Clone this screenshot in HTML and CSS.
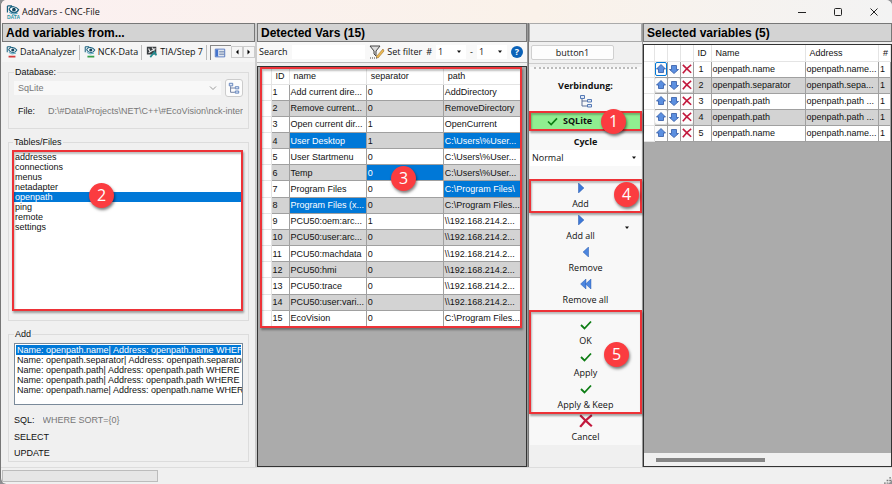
FILE: index.html
```html
<!DOCTYPE html>
<html lang="en">
<head>
    <meta charset="UTF-8">
    <meta name="viewport" content="width=device-width, initial-scale=1.0">
    <title>AddVars - CNC-File</title>
    <link rel="stylesheet" href="styles.css">
</head>
<body>
    <!-- Icon sprites -->
    <svg class="sprites" aria-hidden="true">
        <symbol id="eye" viewBox="0 0 14 14">
            <path d="M1 1h5M1 1v7M3 4c2-3 7-3 10 1-2 4-7 5-10 0z" fill="#fff" stroke="#17607f" stroke-width="1.3"/>
            <circle cx="8" cy="5" r="2" fill="#12445e"/>
            <path d="M3 8l4 2 5-1" fill="none" stroke="#3e9cba" stroke-width="1"/>
        </symbol>
        <symbol id="tree" viewBox="0 0 14 14">
            <path d="M3 5v7h5M3 7h5" fill="none" stroke="#5d6f96" stroke-width="1"/>
            <path d="M1.500 1.500h4v3h-4zM8.500 5.500h4v2.500h-4zM8.500 10.500h4v2.500h-4z" fill="#dfe9f8" stroke="#5579b5"/>
        </symbol>
        <symbol id="check" viewBox="0 0 12 10">
            <path d="M1 5l3.500 3.500L11 1.500" fill="none" stroke="#0d7d14" stroke-width="1.800"/>
        </symbol>
        <symbol id="cross" viewBox="0 0 12 12">
            <path d="M1 1c3 3 6 6 10 9.500M11 1C7 4 4 7 1 11" fill="none" stroke="#c2183c" stroke-width="1.900"/>
        </symbol>
        <symbol id="right" viewBox="0 0 8 12"><path d="M1 0l6.500 6L1 12z" fill="#3c78d8" stroke="#2457ad" stroke-width=".6"/></symbol>
        <symbol id="left" viewBox="0 0 8 12"><path d="M7 0L.5 6 7 12z" fill="#4c86df" stroke="#2457ad" stroke-width=".6"/></symbol>
        <symbol id="up" viewBox="0 0 10 10"><path d="M5 .5L9.500 5H7.500v3.500h-5V5H.5z" fill="#5b8fe0" stroke="#3159a4" stroke-width=".8"/></symbol>
        <symbol id="down" viewBox="0 0 10 10"><path d="M5 9.500L.5 5.500h2v-4h5v4h2z" fill="#5b8fe0" stroke="#3159a4" stroke-width=".8"/></symbol>
        <symbol id="caret" viewBox="0 0 6 4"><path d="M1 .5h4L3 3z" fill="#111"/></symbol>
        <symbol id="chevron" viewBox="0 0 8 6"><path d="M1 1.500l3 3 3-3" fill="none" stroke="#999"/></symbol>
    </svg>

    <div class="window">
        <header class="titlebar">
            <svg class="app-icon" viewBox="0 0 14 14">
                <use href="#eye" width="14" height="13"/>
                <text x="1" y="14" class="icon-text">DATA</text>
            </svg>
            <h1>AddVars - CNC-File</h1>
            <button class="win-button" aria-label="Minimize"><svg viewBox="0 0 8 8"><path d="M0 4.500h8"/></svg></button>
            <button class="win-button" aria-label="Maximize"><svg viewBox="0 0 8 8"><rect x=".5" y=".5" width="7" height="7" rx="1"/></svg></button>
            <button class="win-button" aria-label="Close"><svg viewBox="0 0 8 8"><path d="M.5.5l7 7M7.500.5l-7 7"/></svg></button>
        </header>

        <main class="columns">
            <!-- Source -->
            <section class="panel source">
                <h2>Add variables from...</h2>
                <nav class="tabs">
                    <button class="tab"><svg viewBox="0 0 14 14"><use href="#eye" width="14" height="13"/><path d="M3 12.500h8" stroke="#d43c3c" stroke-width="2"/></svg>DataAnalyzer</button>
                    <button class="tab"><svg viewBox="0 0 14 14"><use href="#eye" width="14" height="13"/><path d="M4 12.500h8" stroke="#37a04a" stroke-width="2"/></svg>NCK-Data</button>
                    <button class="tab"><svg viewBox="0 0 14 14"><path d="M1 1h11v9H1z" fill="#3b3f42"/><path d="M3 3l2 4M7 2l3 3M3 8l8-5" stroke="#eee" stroke-width="1.300"/><path d="M5 13l5-6 2 4" fill="none" stroke="#238c91" stroke-width="2"/></svg>TIA/Step 7</button>
                    <button class="tab current" aria-label="Database"><svg viewBox="0 0 14 12"><path d="M1.500 1.500h11v9h-11z" fill="#fff" stroke="#4168b8"/><path d="M2 2h3v8H2z" fill="#4474cd"/><path d="M6 4h6M6 6h6M6 8h6" stroke="#54709f"/></svg></button>
                    <button class="scroll-button" aria-label="Previous tab"><svg viewBox="0 0 6 8"><path d="M4.500 1.500v5L2 4z"/></svg></button>
                    <button class="scroll-button" aria-label="Next tab"><svg viewBox="0 0 6 8"><path d="M1.500 1.500v5L4 4z"/></svg></button>
                </nav>
                <div class="tab-page">
                    <fieldset class="database">
                        <legend>Database:</legend>
                        <div class="field-row">
                            <div class="combo disabled">
                                <select aria-label="Database" disabled><option>SqLite</option></select>
                                <svg><use href="#chevron"/></svg>
                            </div>
                            <button class="tree-button" aria-label="Browse"><svg><use href="#tree"/></svg></button>
                        </div>
                        <div class="field-row">
                            <label for="file">File:</label>
                            <input id="file" value="D:\#Data\Projects\NET\C++\#EcoVision\nck-interface" disabled>
                        </div>
                    </fieldset>
                    <fieldset class="tables">
                        <legend>Tables/Files</legend>
                        <div class="marked grow">
                            <select class="list" size="8" aria-label="Tables/Files">
                                <option>addresses</option>
                                <option>connections</option>
                                <option>menus</option>
                                <option>netadapter</option>
                                <option selected>openpath</option>
                                <option>ping</option>
                                <option>remote</option>
                                <option>settings</option>
                            </select>
                            <span class="badge badge-2">2</span>
                        </div>
                    </fieldset>
                    <fieldset class="add">
                        <legend>Add</legend>
                        <select class="list bordered" size="5" aria-label="Add">
                            <option selected>Name: openpath.name| Address: openpath.name WHERE SORT</option>
                            <option>Name: openpath.separator| Address: openpath.separator WHERE</option>
                            <option>Name: openpath.path| Address: openpath.path WHERE SORT</option>
                            <option>Name: openpath.path| Address: openpath.path WHERE SORT</option>
                            <option>Name: openpath.name| Address: openpath.name WHERE SORT</option>
                        </select>
                        <div class="sql-row">
                            <label for="sql">SQL:</label>
                            <input id="sql" value="WHERE SORT={0}" disabled>
                        </div>
                        <p>SELECT</p>
                        <p>UPDATE</p>
                    </fieldset>
                </div>
            </section>

            <!-- Detected variables -->
            <section class="panel detected">
                <h2>Detected Vars (15)</h2>
                <div class="toolbar">
                    <label for="search">Search</label>
                    <input id="search">
                    <button class="filter"><svg viewBox="0 0 16 14"><path d="M1 1h10L7 6v5L5 9V6z" fill="#ddd" stroke="#444"/><path d="M7 12l7-8 1 2-6 7z" fill="#eebc52" stroke="#9b6c26" stroke-width=".6"/><path d="M1 13h7" stroke="#444" stroke-dasharray="1 1"/></svg>Set filter</button>
                    <label for="from">#</label>
                    <div class="combo number"><select id="from"><option>1</option></select><svg><use href="#caret"/></svg></div>
                    <label for="to">-</label>
                    <div class="combo number"><select id="to"><option>1</option></select><svg><use href="#caret"/></svg></div>
                    <button class="help" aria-label="Help">?</button>
                </div>
                <div class="grid-area">
                    <div class="marked">
                        <table class="vars">
                            <colgroup><col class="c-head"><col class="c-id"><col><col><col></colgroup>
                            <thead><tr><th></th><th>ID</th><th>name</th><th>separator</th><th>path</th></tr></thead>
                            <tbody>
                                <tr><th></th><td>1</td><td>Add current dire...</td><td>0</td><td>AddDirectory</td></tr>
                                <tr><th></th><td>2</td><td>Remove current...</td><td>0</td><td>RemoveDirectory</td></tr>
                                <tr><th></th><td>3</td><td>Open current dir...</td><td>1</td><td>OpenCurrent</td></tr>
                                <tr><th></th><td>4</td><td class="selected">User Desktop</td><td>1</td><td class="selected">C:\Users\%User...</td></tr>
                                <tr><th></th><td>5</td><td>User Startmenu</td><td>0</td><td>C:\Users\%User...</td></tr>
                                <tr><th></th><td>6</td><td>Temp</td><td class="selected">0</td><td>C:\Users\%User...</td></tr>
                                <tr><th></th><td>7</td><td>Program Files</td><td>0</td><td class="selected">C:\Program Files\</td></tr>
                                <tr><th></th><td>8</td><td class="selected">Program Files (x...</td><td>0</td><td>C:\Program Files...</td></tr>
                                <tr><th></th><td>9</td><td>PCU50:oem:arc...</td><td>1</td><td>\\192.168.214.2...</td></tr>
                                <tr><th></th><td>10</td><td>PCU50:user:arc...</td><td>0</td><td>\\192.168.214.2...</td></tr>
                                <tr><th></th><td>11</td><td>PCU50:machdata</td><td>0</td><td>\\192.168.214.2...</td></tr>
                                <tr><th></th><td>12</td><td>PCU50:hmi</td><td>0</td><td>\\192.168.214.2...</td></tr>
                                <tr><th></th><td>13</td><td>PCU50:trace</td><td>0</td><td>\\192.168.214.2...</td></tr>
                                <tr><th></th><td>14</td><td>PCU50:user:vari...</td><td>0</td><td>\\192.168.214.2...</td></tr>
                                <tr><th></th><td>15</td><td>EcoVision</td><td>0</td><td>C:\Program Files...</td></tr>
                            </tbody>
                        </table>
                        <span class="badge badge-3">3</span>
                    </div>
                </div>
            </section>

            <!-- Actions -->
            <section class="panel actions">
                <div class="blank-head"></div>
                <div class="button-row"><button class="plain">button1</button></div>
                <div class="strip">
                    <div class="grip"></div>
                    <b class="strip-title">Verbindung:</b>
                    <svg class="strip-icon"><use href="#tree"/></svg>
                    <div class="marked">
                        <button class="connection"><svg><use href="#check"/></svg>SQLite</button>
                        <span class="badge badge-1">1</span>
                    </div>
                    <label class="strip-title" for="cycle">Cycle</label>
                    <div class="combo cycle"><select id="cycle"><option>Normal</option></select><svg><use href="#caret"/></svg></div>
                    <div class="marked">
                        <button class="action split"><svg><use href="#right"/></svg>Add</button>
                        <span class="badge badge-4">4</span>
                    </div>
                    <button class="action split"><svg><use href="#right"/></svg>Add all<svg class="drop"><use href="#caret"/></svg></button>
                    <button class="action"><svg><use href="#left"/></svg>Remove</button>
                    <button class="action"><svg class="double" viewBox="0 0 14 12"><use href="#left" width="8" height="12"/><use href="#left" x="6" width="8" height="12"/></svg>Remove all</button>
                    <div class="marked confirm">
                        <button class="action"><svg><use href="#check"/></svg>OK</button>
                        <button class="action"><svg><use href="#check"/></svg>Apply</button>
                        <button class="action"><svg><use href="#check"/></svg>Apply &amp; Keep</button>
                        <span class="badge badge-5">5</span>
                    </div>
                    <button class="action cancel"><svg><use href="#cross"/></svg>Cancel</button>
                </div>
            </section>

            <!-- Selected variables -->
            <section class="panel chosen">
                <h2>Selected variables (5)</h2>
                <div class="grid-area">
                    <table class="vars">
                        <colgroup><col class="c-head"><col class="c-icon"><col class="c-icon"><col class="c-icon"><col class="c-id"><col class="c-name"><col><col class="c-num"></colgroup>
                        <thead><tr><th></th><th></th><th></th><th></th><th>ID</th><th>Name</th><th>Address</th><th>#</th></tr></thead>
                        <tbody>
                            <tr><th></th><td><button class="focused" aria-label="Up"><svg><use href="#up"/></svg></button></td><td><button aria-label="Down"><svg><use href="#down"/></svg></button></td><td><button aria-label="Delete"><svg><use href="#cross"/></svg></button></td><td>1</td><td>openpath.name</td><td>openpath.name...</td><td>1</td></tr>
                            <tr><th></th><td><button aria-label="Up"><svg><use href="#up"/></svg></button></td><td><button aria-label="Down"><svg><use href="#down"/></svg></button></td><td><button aria-label="Delete"><svg><use href="#cross"/></svg></button></td><td>2</td><td>openpath.separator</td><td>openpath.sepa...</td><td>1</td></tr>
                            <tr><th></th><td><button aria-label="Up"><svg><use href="#up"/></svg></button></td><td><button aria-label="Down"><svg><use href="#down"/></svg></button></td><td><button aria-label="Delete"><svg><use href="#cross"/></svg></button></td><td>3</td><td>openpath.path</td><td>openpath.path ...</td><td>1</td></tr>
                            <tr><th></th><td><button aria-label="Up"><svg><use href="#up"/></svg></button></td><td><button aria-label="Down"><svg><use href="#down"/></svg></button></td><td><button aria-label="Delete"><svg><use href="#cross"/></svg></button></td><td>4</td><td>openpath.path</td><td>openpath.path ...</td><td>1</td></tr>
                            <tr><th></th><td><button aria-label="Up"><svg><use href="#up"/></svg></button></td><td><button aria-label="Down"><svg><use href="#down"/></svg></button></td><td><button aria-label="Delete"><svg><use href="#cross"/></svg></button></td><td>5</td><td>openpath.name</td><td>openpath.name...</td><td>1</td></tr>
                        </tbody>
                    </table>
                    <div class="scrollbar"><div class="thumb"></div></div>
                </div>
            </section>
        </main>

        <footer class="status">
            <div class="progress"></div>
            <svg class="resize" viewBox="0 0 8 8"><path d="M6 1h2M3 4h2M6 4h2M0 7h2M3 7h2M6 7h2" stroke="#777" stroke-width="1.500"/></svg>
        </footer>
    </div>
</body>
</html>
```

FILE: styles.css
```css
* {
    box-sizing: border-box;
}

body {
    margin: 0;
    background: #8f8f93;
    color: #111;
    font: 9px/12px "Liberation Sans", Arial, sans-serif;
}

button, input, select {
    margin: 0;
    padding: 0;
    border: 0;
    border-radius: 0;
    background: none;
    color: inherit;
    font: inherit;
}

h1, h2, p {
    margin: 0;
}

.sprites {
    display: none;
}

/* Window frame */
.window {
    display: flex;
    flex-direction: column;
    min-height: 100vh;
    border-left: 1px solid #777;
    border-radius: 6px;
    background: #f0f0f0;
    overflow: hidden;
}

.titlebar {
    display: flex;
    align-items: center;
    height: 23px;
    padding-left: 5px;
    background: linear-gradient(90deg, #fbf0f1, #faf2ea 60%, #f3f3f3);
}

.titlebar h1 {
    flex: 1;
    font: 9px/12px "Open Sans", sans-serif;
}

.app-icon {
    width: 14px;
    height: 14px;
    margin-right: 2px;
}

.icon-text {
    font: bold 5px "Liberation Sans", sans-serif;
    fill: #2895a8;
}

.win-button {
    display: grid;
    place-items: center;
    width: 36px;
    height: 22px;
}

.win-button svg {
    width: 8px;
    height: 8px;
    fill: none;
    stroke: #222;
}

.columns {
    flex: 1;
    display: grid;
    grid-template-columns: 256fr 271fr 115px 249fr;
}

.panel {
    display: flex;
    flex-direction: column;
    min-width: 0;
    border-right: 1px solid #999;
}

.panel h2, .blank-head {
    height: 19px;
    padding-left: 3px;
    border: 1px solid #777;
    background: #d3d3d3;
    color: #000;
    font-size: 12px;
    line-height: 18px;
    white-space: nowrap;
}

.panel .blank-head {
    border-color: #aaa;
    background: #f0f0f0;
}

.source {
    padding-left: 1px;
    border-right: 2px solid #ccc;
}

/* Tabs */
.tabs {
    display: flex;
    align-items: center;
    height: 20px;
    padding-left: 3px;
    background: #f5f5f5;
    font-family: "Open Sans", sans-serif;
}

.tab {
    display: flex;
    align-items: center;
    gap: 2px;
    height: 15px;
    padding: 0 3px 0 1px;
    border-right: 1px solid #bbb;
    margin-right: 3px;
    white-space: nowrap;
}

.tab svg {
    flex: none;
    width: 12px;
    height: 12px;
}

.tab.current {
    flex: 1;
    margin: 0;
    padding-left: 3px;
    border: 1px solid #888;
    border-right: 0;
    border-bottom: 0;
}

.scroll-button {
    flex: none;
    display: grid;
    place-items: center;
    width: 12px;
    height: 12px;
    border: 1px solid #ccc;
}

.scroll-button svg {
    width: 6px;
    height: 8px;
}

/* Tab page */
.tab-page {
    flex: 1;
    display: flex;
    flex-direction: column;
    gap: 7px;
    padding: 4px 6px 5px;
}

fieldset {
    display: flex;
    flex-direction: column;
    min-width: 0;
    margin: 0;
    padding: 3px 5px 5px;
    border: 1px solid #dcdcdc;
}

legend {
    padding: 0 1px;
}

.database {
    gap: 8px;
    padding: 1px 5px 11px;
}

.field-row {
    display: flex;
    align-items: center;
    gap: 4px;
}

.field-row label {
    width: 30px;
    padding-left: 4px;
}

.field-row input, .sql-row input {
    flex: 1;
    min-width: 0;
    height: 12px;
    color: #777;
}

.combo {
    display: grid;
    align-items: center;
    background: #fff;
}

.combo select {
    grid-area: 1 / 1;
    height: 14px;
    appearance: none;
}

.combo svg {
    grid-area: 1 / 1;
    justify-self: end;
    width: 6px;
    height: 4px;
    margin-right: 4px;
    pointer-events: none;
}

.combo.disabled {
    flex: 1;
    background: #f8f8f8;
}

.combo.disabled select {
    padding-left: 4px;
    color: #777;
    opacity: 1;
}

.combo.disabled svg {
    width: 8px;
    height: 6px;
}

.tree-button {
    display: grid;
    place-items: center;
    width: 18px;
    height: 18px;
    border: 1px solid #ccc;
    border-radius: 3px;
    background: #fcfcfc;
}

.tree-button svg {
    width: 12px;
    height: 12px;
}

.tables {
    flex: 1;
    padding: 3px 6px 10px 4px;
}

.tables .marked {
    flex: 1;
    display: flex;
}

.list {
    flex: 1;
    width: 100%;
    padding: 1px 1px;
    background: #fff;
    overflow: hidden;
    color: #111;
}

.list.bordered {
    flex: none;
    height: 62px;
    border: 1px solid #7a8a9a;
}

.list option {
    min-height: 10px;
    padding: 0 1px;
    line-height: 10px;
}

.list option:checked {
    background: linear-gradient(#0078d7, #0078d7);
    -webkit-text-fill-color: #fff;
}

.add {
    padding: 3px 5px 0;
}

.sql-row {
    display: flex;
    align-items: center;
    gap: 8px;
    height: 16px;
    margin: 7px 0 1px;
}

.add p {
    line-height: 16px;
}

/* Red frames with numbered badges */
.marked {
    position: relative;
}

.marked::after {
    content: "";
    position: absolute;
    inset: -1px;
    border: 2px solid #ed3237;
    box-shadow: 1px 2px 2px rgba(0, 0, 0, 0.35), inset 1px 2px 2px rgba(0, 0, 0, 0.25);
    pointer-events: none;
}

.badge {
    position: absolute;
    z-index: 1;
    width: 25px;
    height: 25px;
    border-radius: 50%;
    background: #fb3c40;
    box-shadow: 1px 2px 3px rgba(0, 0, 0, 0.5);
    color: #fff;
    font: 16px/25px "Open Sans", sans-serif;
    text-align: center;
}

.badge-1 {
    right: 15px;
    top: -3px;
}

.badge-2 {
    left: 76px;
    top: 32px;
}

.badge-3 {
    left: 130px;
    top: 98px;
}

.badge-4 {
    right: 2px;
    top: 2px;
}

.badge-5 {
    right: 12px;
    top: 25px;
}

/* Toolbar */
.toolbar {
    display: flex;
    align-items: center;
    gap: 4px;
    height: 21px;
    padding: 0 4px 0 2px;
    border-bottom: 1px solid #bbb;
    background: #f8f8f8;
    font-family: "Open Sans", sans-serif;
}

.toolbar input {
    flex: 1;
    min-width: 0;
    height: 14px;
    background: #fff;
}

.filter {
    display: flex;
    align-items: center;
    gap: 2px;
    white-space: nowrap;
}

.filter svg {
    width: 16px;
    height: 14px;
}

.number {
    width: 30px;
}

.number select {
    padding-left: 2px;
}

.help {
    width: 12px;
    height: 12px;
    border-radius: 50%;
    background: #0b62b8;
    color: #fff;
    font-weight: bold;
}

/* Data grids */
.grid-area {
    flex: 1;
    display: flex;
    flex-direction: column;
    margin-top: 3px;
    border: 1px solid #333;
    background: #ababab;
}

.detected .grid-area {
    padding: 1px 5px 0 3px;
}

.vars {
    width: 100%;
    table-layout: fixed;
    border-collapse: collapse;
    background: #fff;
}

.vars tr {
    height: 16px;
}

.vars th, .vars td {
    padding: 0 1px;
    border-right: 1px solid #a0a0a0;
    border-bottom: 1px solid #a0a0a0;
    text-align: left;
    font-weight: normal;
    white-space: nowrap;
    overflow: hidden;
}

.vars th {
    padding-left: 4px;
    border-color: #e4e4e4;
}

.vars tbody tr:nth-child(even) td {
    background: #d3d3d3;
}

.vars tbody td.selected, .vars tbody tr:nth-child(even) td.selected {
    background: #0078d7;
    color: #fff;
}

.detected .vars {
    height: 259px;
}

.c-head {
    width: 10px;
}

.c-id {
    width: 18px;
}

.c-icon {
    width: 13px;
}

.c-name {
    width: 94px;
}

.c-num {
    width: 12px;
}

.chosen {
    border-right: 0;
}

.chosen .grid-area {
    margin-top: 2px;
}

.chosen .vars td button {
    display: grid;
    place-items: center;
    width: 100%;
    height: 14px;
    border-radius: 2px;
    background: #fcfcfc;
}

.chosen .vars td:nth-child(-n+4) {
    padding: 0;
}

.chosen .vars td:nth-child(5) {
    padding-left: 5px;
}

.chosen .vars td button.focused {
    outline: 1px solid #0078d7;
    outline-offset: -1px;
}

.chosen .vars td svg {
    width: 10px;
    height: 10px;
}

.scrollbar {
    height: 13px;
    margin-top: auto;
    padding: 5px 12px 4px;
    background: #f0f0f0;
}

.thumb {
    width: 49%;
    height: 4px;
    background: #858585;
}

/* Action strip */
.actions {
    border-left: 1px solid #777;
    font-family: "Open Sans", sans-serif;
}

.button-row {
    padding: 3px 28px 3px 2px;
    border-bottom: 1px solid #ccc;
}

.plain {
    display: block;
    width: 100%;
    height: 15px;
    border: 1px solid #d0d0d0;
    border-radius: 2px;
    background: #fdfdfd;
}

.strip {
    display: flex;
    flex-direction: column;
    margin: 3px 1px 0;
    background: #f8f8f8;
}

.grip {
    margin: 0 4px 9px;
    border-top: 2px dotted #bbb;
}

.strip-title {
    font-weight: bold;
    line-height: 16px;
    text-align: center;
}

.strip-icon {
    align-self: center;
    width: 14px;
    height: 14px;
    margin-bottom: 4px;
}

.connection {
    display: flex;
    align-items: center;
    gap: 5px;
    width: 100%;
    height: 18px;
    margin-bottom: 4px;
    padding-left: 16px;
    border: 1px solid #111;
    background: #90ee90;
    font-weight: bold;
}

.connection svg {
    width: 11px;
    height: 9px;
}

.marked:has(.connection)::after {
    bottom: 3px;
}

.cycle {
    height: 16px;
    margin-bottom: 14px;
}

.cycle select {
    padding-left: 2px;
}

.action {
    display: grid;
    grid-template-rows: 16px 16px;
    place-items: center;
    width: 100%;
    height: 32px;
}

.action.split {
    position: relative;
    padding-right: 10px;
}

.action svg {
    width: 12px;
    height: 10px;
}

.action .double {
    width: 14px;
}

.action .drop {
    position: absolute;
    right: 11px;
    top: 14px;
    width: 6px;
    height: 4px;
}

.action.cancel svg {
    width: 14px;
    height: 14px;
}

.confirm {
    margin-top: 9px;
}

.confirm::after {
    top: -7px;
}

/* Status bar */
.status {
    display: flex;
    align-items: center;
    justify-content: space-between;
    height: 17px;
    padding: 0 1px;
    border-top: 1px solid #ddd;
}

.progress {
    width: 156px;
    height: 12px;
    border: 1px solid #bcbcbc;
    background: #e6e6e6;
}

.resize {
    align-self: flex-end;
    width: 7px;
    height: 7px;
}
```
